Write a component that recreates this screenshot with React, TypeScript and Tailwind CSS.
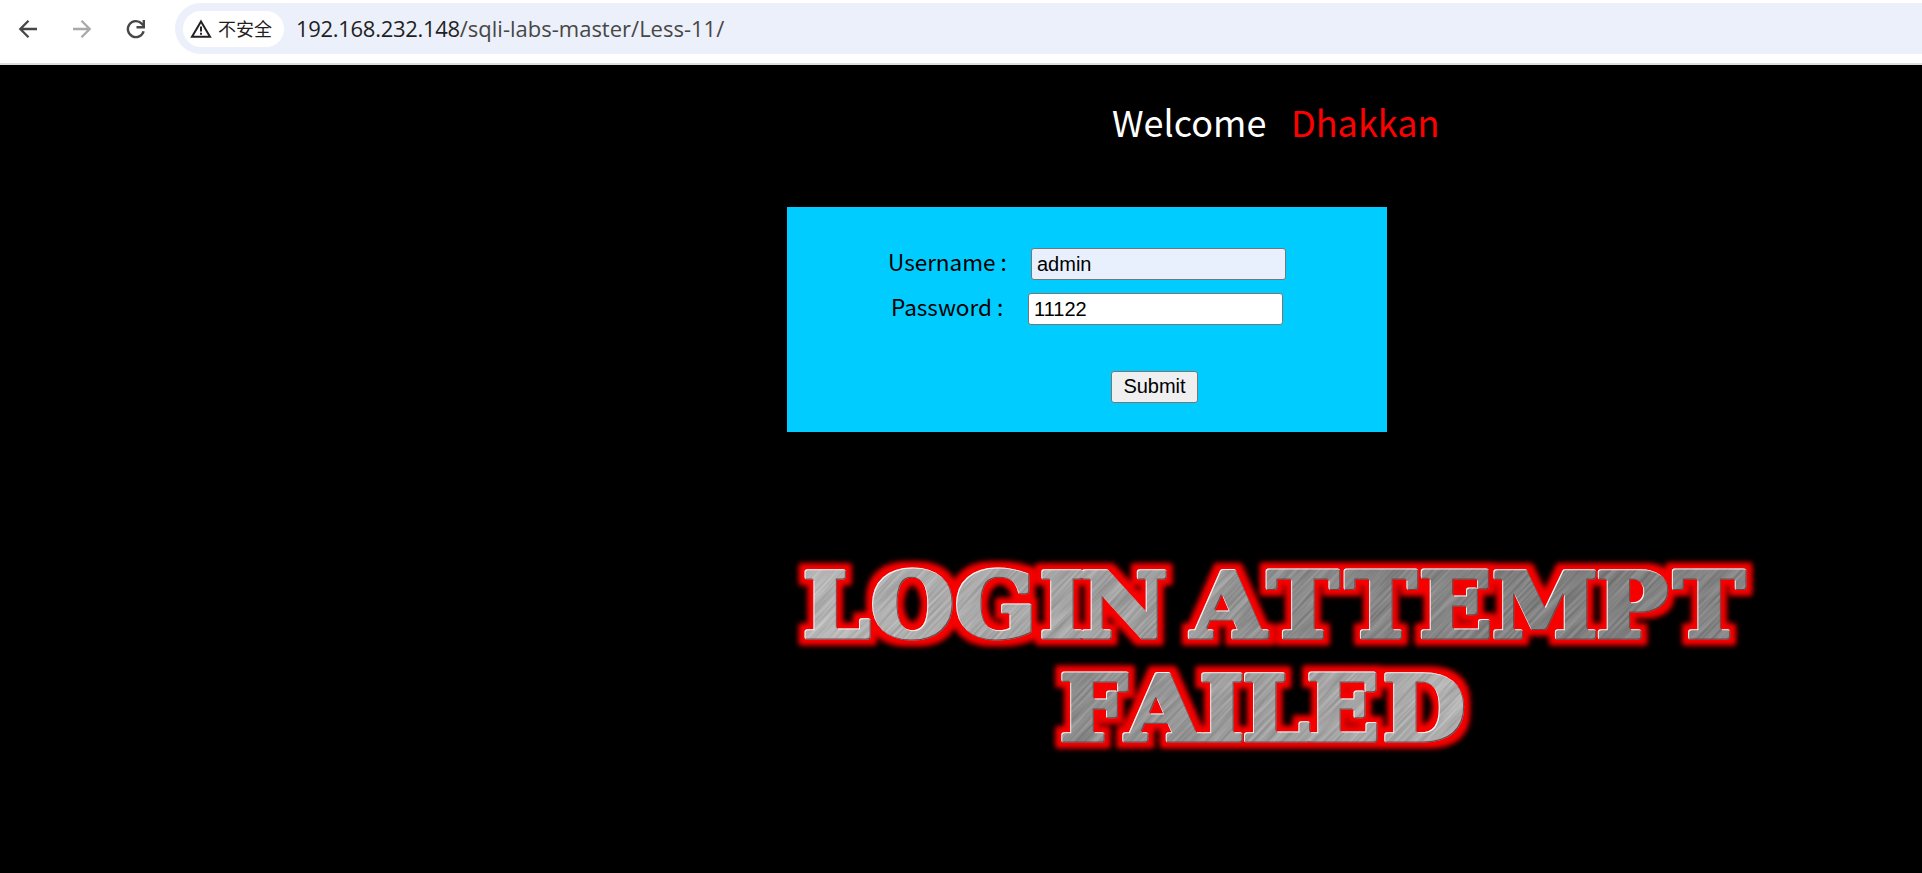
import React from "react";

const STRETCH = 1.07;
const topCenters = [49.5, 125.5, 208.5, 275, 337, 395, 441.5, 516, 594, 668.5, 758, 845, 922];
const bottomCenters = [306.5, 376, 435, 489, 556, 637];
const spread = (centers: number[]) => centers.map((c) => (c / STRETCH).toFixed(1)).join(" ");

function Toolbar() {
  return (
    <header className="flex h-[65px] w-full items-start border-b-2 border-[#dedede] bg-white pt-[3px] font-['Open_Sans','Noto_Sans_CJK_SC',sans-serif]">
      <div className="flex h-[51px] w-[175px] shrink-0 items-center pl-[15px]">
        <svg width="26" height="26" viewBox="0 0 26 26" fill="none" stroke="#474747" strokeWidth="2.3">
          <path d="M22 13H6M13.5 4.8L5.3 13l8.2 8.2" />
        </svg>
        <svg className="ml-[28px]" width="26" height="26" viewBox="0 0 26 26" fill="none" stroke="#a9a9a9" strokeWidth="2.3">
          <path d="M4 13h16M12.500 4.800L20.700 13l-8.200 8.200" />
        </svg>
        <svg className="ml-[28px]" width="26" height="26" viewBox="0 0 26 26" fill="none" stroke="#474747" strokeWidth="2.4">
          <path d="M20.600 15.200A8 8 0 1 1 18.700 7.600L20.800 9.700" />
          <path d="M20.800 4v7.200h-7.300" />
        </svg>
      </div>
      <div className="flex h-[51px] flex-1 items-center rounded-l-full bg-[#ecf0fa] pl-2">
        <div className="flex h-9 w-[101px] items-center rounded-full bg-white pl-[7px]">
          <svg width="22" height="20" viewBox="0 0 22 20" fill="none" stroke="#222" strokeWidth="2">
            <path d="M11 2.500L20 17.700H2z" />
            <path d="M11 7.500v5M11 13.700v2" />
          </svg>
          <span className="mb-px ml-[6px] whitespace-nowrap font-['Noto_Sans_CJK_SC',sans-serif] text-[18px] leading-none text-[#1f1f1f]">不安全</span>
        </div>
        <p className="mb-[2px] ml-[12px] whitespace-nowrap text-[22px] leading-none text-[#474747]">
          <span className="tracking-[-0.3px] text-[#1f1f1f]">192.168.232.148</span><span>/sqli-labs-master/Less-11/</span>
        </p>
      </div>
    </header>
  );
}

function LoginForm() {
  return (
    <form className="ml-[787px] h-[225px] w-[600px] bg-[#00ccff] pt-[41px] text-[22.5px] leading-none text-black" onSubmit={(e) => e.preventDefault()}>
      <div className="flex h-8 items-center pl-[101px]">
        <label className="mb-1.5 w-[143px] whitespace-nowrap" htmlFor="uname">Username :</label>
        <input id="uname" defaultValue="admin" className="h-8 w-[255px] rounded-[3px] border-[1.500px] border-[#767676] bg-[#e8f0fe] px-[5px] font-['Liberation_Sans',sans-serif] text-[20px]" />
      </div>
      <div className="mt-[13px] flex h-8 items-center pl-[104px]">
        <label className="mb-1.5 w-[137px] whitespace-nowrap" htmlFor="passwd">Password :</label>
        <input id="passwd" defaultValue="11122" className="h-8 w-[255px] rounded-[3px] border-[1.500px] border-[#767676] bg-white px-[5px] font-['Liberation_Sans',sans-serif] text-[20px]" />
      </div>
      <button className="ml-[324px] mt-[46px] block h-8 w-[87px] rounded-[3px] border border-[#767676] bg-[#efefef] pb-[2px] font-['Liberation_Sans',sans-serif] text-[20px] leading-none">Submit</button>
    </form>
  );
}

function FailedBanner() {
  return (
    <svg className="ml-[787px] mt-[108px] block" width="980" height="230" viewBox="0 0 980 230">
      <defs>
        <linearGradient id="metal" gradientUnits="userSpaceOnUse" x1="0" y1="20" x2="980" y2="60">
          <stop offset="0" stopColor="#c0c0c0" />
          <stop offset="0.2" stopColor="#adadad" />
          <stop offset="0.38" stopColor="#a0a0a0" />
          <stop offset="0.5" stopColor="#878787" />
          <stop offset="0.75" stopColor="#7d7d7d" />
          <stop offset="1" stopColor="#878787" />
        </linearGradient>
        <linearGradient id="metalLow" gradientUnits="userSpaceOnUse" x1="260" y1="0" x2="680" y2="0">
          <stop offset="0" stopColor="#8c8c8c" />
          <stop offset="0.5" stopColor="#a4a4a4" />
          <stop offset="1" stopColor="#bcbcbc" />
        </linearGradient>
        <filter id="scratches" filterUnits="userSpaceOnUse" x="-700" y="-900" width="2200" height="1900" colorInterpolationFilters="sRGB">
          <feTurbulence type="fractalNoise" baseFrequency="0.015 0.4" numOctaves="3" seed="4" />
          <feColorMatrix values="1.8 0 0 0 -0.35  1.8 0 0 0 -0.35  1.8 0 0 0 -0.35  0 0 0 0 0.15" />
        </filter>
        <filter id="bevel" filterUnits="userSpaceOnUse" x="0" y="0" width="980" height="230" colorInterpolationFilters="sRGB">
          <feMorphology in="SourceAlpha" operator="dilate" radius="6" result="fat" />
          <feGaussianBlur in="fat" stdDeviation="2.600" result="soft" />
          <feFlood floodColor="#f80000" />
          <feComposite in2="soft" operator="in" result="glow" />
          <feOffset in="SourceAlpha" dx="1.300" dy="1.300" result="shifted" />
          <feFlood floodColor="#ffeeee" />
          <feComposite in2="SourceAlpha" operator="in" />
          <feComposite in2="shifted" operator="out" result="light" />
          <feOffset in="SourceAlpha" dx="-1" dy="-1" result="shiftedBack" />
          <feFlood floodColor="#704444" />
          <feComposite in2="SourceAlpha" operator="in" />
          <feComposite in2="shiftedBack" operator="out" result="dark" />
          <feMerge>
            <feMergeNode in="glow" />
            <feMergeNode in="SourceGraphic" />
            <feMergeNode in="dark" />
            <feMergeNode in="light" />
          </feMerge>
        </filter>
        <pattern id="brushed" patternUnits="userSpaceOnUse" width="980" height="230">
          <rect width="980" height="115" fill="url(#metal)" />
          <rect y="115" width="980" height="115" fill="url(#metalLow)" />
          <g transform="rotate(-48)">
            <rect x="-700" y="-900" width="2200" height="1900" filter="url(#scratches)" />
          </g>
        </pattern>
      </defs>
      <g filter="url(#bevel)">
        <g transform={`scale(${STRETCH} 1)`} textAnchor="middle" fill="url(#brushed)" stroke="url(#brushed)" strokeWidth="5" strokeLinejoin="round" fontFamily="'DejaVu Serif', serif" fontWeight="700" fontSize="89.5">
          <text x={spread(topCenters)} y="97">LOGIN ATTEMPT</text>
          <text x={spread(bottomCenters)} y="200">FAILED</text>
        </g>
      </g>
    </svg>
  );
}

export default function App() {
  return (
    <div className="h-[873px] w-full overflow-hidden bg-black font-['Noto_Sans_CJK_SC',sans-serif]">
      <Toolbar />
      <h1 className="flex h-[142px] whitespace-nowrap pl-[1112px] pt-[36px] text-[36px] font-normal leading-[40px] text-white">
        <span className="w-[179px]">Welcome</span>
        <span className="text-[#ff0000]">Dhakkan</span>
      </h1>
      <LoginForm />
      <FailedBanner />
    </div>
  );
}
